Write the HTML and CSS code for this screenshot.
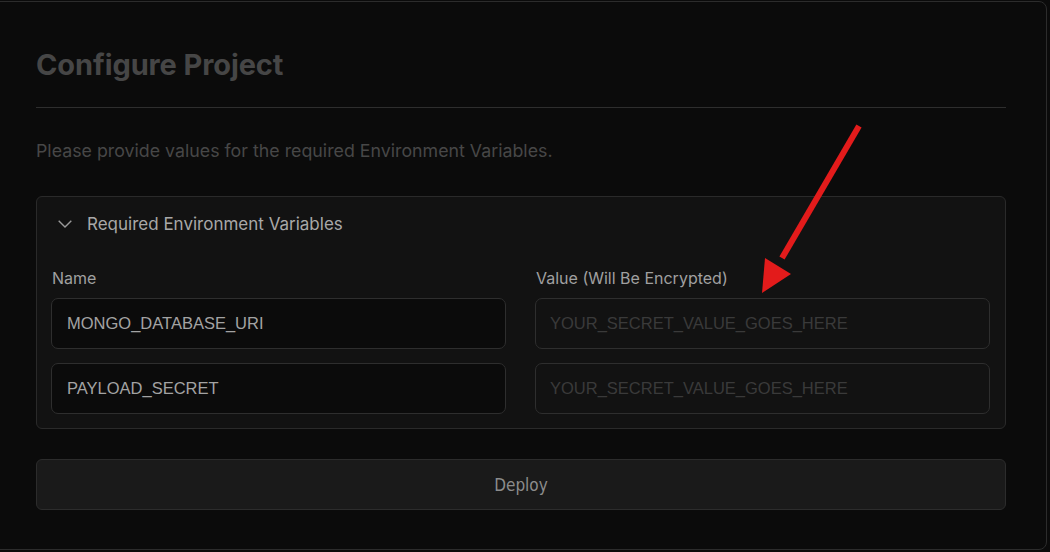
FILE: index.html
```html
<!DOCTYPE html>
<html>
<head>
<meta charset="utf-8">
<link rel="stylesheet" href="styles.css">
</head>
<body>
<div class="panel">
  <h1 class="title">Configure Project</h1>
  <div class="divider"></div>
  <p class="subtitle">Please provide values for the required Environment Variables.</p>
  <div class="card">
    <div class="card-header">
      <svg class="chevron" width="14" height="8" viewBox="0 0 14 8"><path d="M0.7 0.7 L7 7 L13.3 0.7" fill="none" stroke="#9a9a9a" stroke-width="1.4"/></svg>
      <span>Required Environment Variables</span>
    </div>
    <div class="grid">
      <div class="label">Name</div>
      <div class="label">Value (Will Be Encrypted)</div>
      <div class="input name">MONGO_DATABASE_URI</div>
      <div class="input value">YOUR_SECRET_VALUE_GOES_HERE</div>
      <div class="input name">PAYLOAD_SECRET</div>
      <div class="input value">YOUR_SECRET_VALUE_GOES_HERE</div>
    </div>
  </div>
  <div class="deploy">Deploy</div>
</div>
<svg class="arrow" width="1050" height="552" viewBox="0 0 1050 552">
  <line x1="859" y1="126" x2="782" y2="258" stroke="#e31b1b" stroke-width="6"/>
  <polygon points="762,293 765,258 791,274" fill="#e31b1b"/>
</svg>
</body>
</html>
```
FILE: styles.css
```css
html, body {
  margin: 0;
  padding: 0;
  background: #0b0b0b;
  width: 1050px;
  height: 552px;
  overflow: hidden;
  font-family: Inter, "Liberation Sans", sans-serif;
}
.panel {
  box-sizing: border-box;
  margin: 1px 0 0 -10px;
  width: 1057px;
  height: 549px;
  border: 1px solid #2c2c2c;
  border-radius: 8px;
  background: #0b0b0b;
  padding: 45px 40px 0 45px;
}
.title {
  margin: 0;
  font-size: 29px;
  font-weight: 700;
  line-height: 36px;
  color: #464646;
  letter-spacing: -0.1px;
}
.divider {
  margin-top: 24px;
  height: 1px;
  background: #2e2e2e;
}
.subtitle {
  margin: 32px 0 0 0;
  font-size: 17.8px;
  line-height: 22px;
  color: #474747;
}
.card {
  margin-top: 34px;
  background: #121212;
  border: 1px solid #2a2a2a;
  border-radius: 6px;
  padding: 0 15px 14px 14px;
}
.card-header {
  display: flex;
  align-items: center;
  height: 54px;
  padding-left: 7px;
  gap: 15px;
  color: #a8a8a8;
  font-size: 17px;
}
.grid {
  margin-top: 17px;
  display: grid;
  grid-template-columns: 1fr 1fr;
  column-gap: 29px;
  row-gap: 14px;
}
.label {
  color: #a0a0a0;
  font-size: 16px;
  line-height: 20px;
  margin: 0 0 -4px 1px;
}
.input {
  box-sizing: border-box;
  height: 51px;
  border: 1px solid #2e2e2e;
  border-radius: 7px;
  display: flex;
  align-items: center;
  padding-left: 15px;
  font-family: "Liberation Sans", Arial, sans-serif;
  font-size: 16.5px;
}
.input.name {
  background: #0b0b0b;
  color: #a3a3a3;
}
.input.value {
  background: #121212;
  color: #3a3a3a;
  padding-left: 14px;
}
.deploy {
  margin-top: 30px;
  box-sizing: border-box;
  height: 51px;
  background: #1a1a1a;
  border: 1px solid #2c2c2c;
  border-radius: 6px;
  display: flex;
  align-items: center;
  justify-content: center;
  color: #8c8c8c;
  font-family: "DejaVu Sans Condensed", "DejaVu Sans", sans-serif;
  font-stretch: condensed;
  font-size: 17px;
}
.arrow {
  position: absolute;
  left: 0;
  top: 0;
  pointer-events: none;
}
```
